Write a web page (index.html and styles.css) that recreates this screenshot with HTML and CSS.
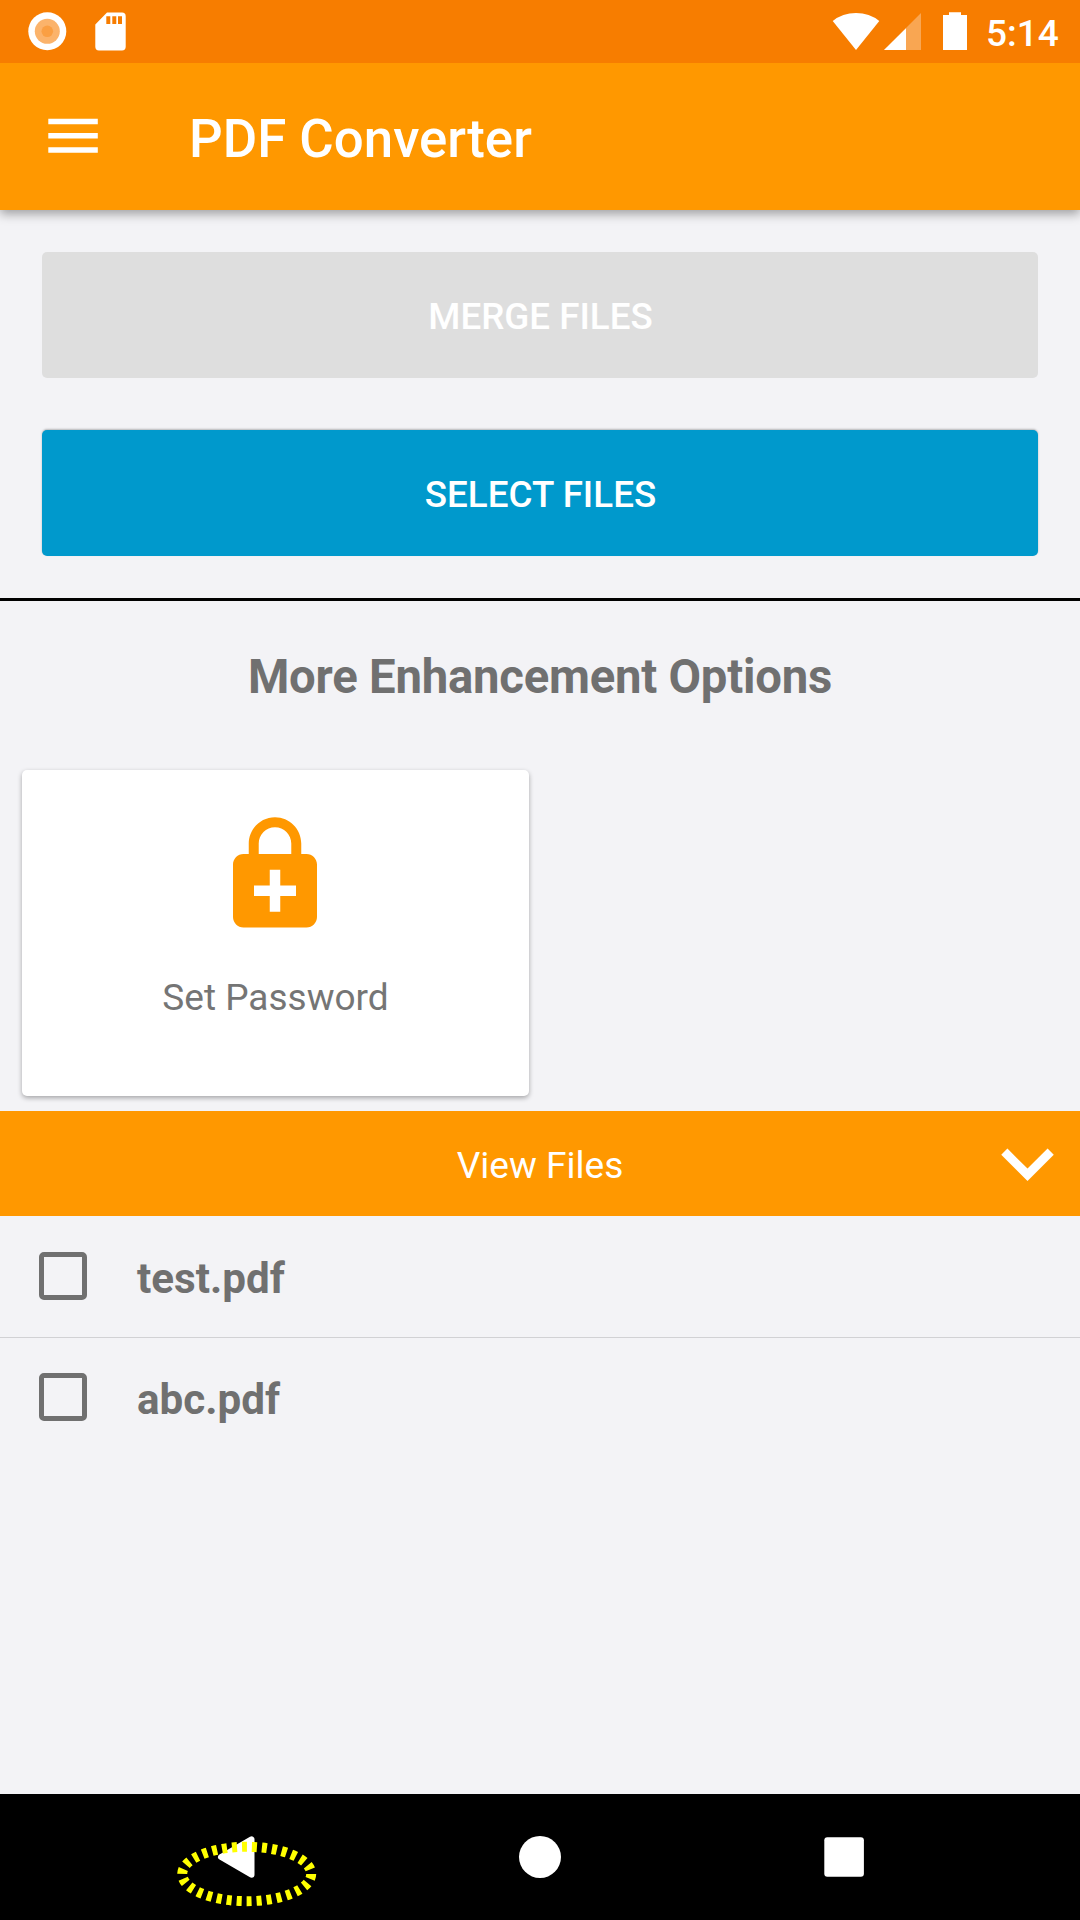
FILE: index.html
```html
<!DOCTYPE html>
<html lang="en">
<head>
<meta charset="utf-8">
<title>PDF Converter</title>
<link rel="stylesheet" href="styles.css">
</head>
<body>
<div class="screen">
  <div class="status">
    <svg class="status-left" width="140" height="63" viewBox="0 0 140 63" fill="#fff">
      <circle cx="47.3" cy="31.3" r="19"/>
      <circle cx="47.3" cy="31.3" r="12.5" fill="#fbb36b"/>
      <circle cx="47.3" cy="31.3" r="5.8" fill="#fa9f43"/>
      <path fill-rule="evenodd" d="M107 12.5h15q3.7 0 3.7 3.7v30.6q0 3.7-3.7 3.7H99q-3.7 0-3.7-3.7V24.5zM106.3 16.2v7.8h4v-7.8zM112.3 16.2v7.8h4v-7.8zM118 16.2v7.8h4v-7.8z"/>
    </svg>
    <svg class="status-right" width="150" height="63" viewBox="825 0 150 63" fill="#fff">
      <path d="M856 50L832.7 21Q842.5 13 856 13T879.3 21z"/>
      <path d="M921 13V50H884z" fill-opacity=".32"/>
      <path d="M906 28.3V50H884z"/>
      <path d="M949 12.2h12V15h6v35h-24V15h6z"/>
    </svg>
    <span class="clock">5:14</span>
  </div>
  <header class="toolbar">
    <svg class="menu" width="50" height="38" viewBox="0 0 50 38" fill="#fff">
      <path d="M.3 .8h49.5v5.500H.3zM.3 15h49.5v5.500H.3zM.3 29.2h49.5v5.500H.3z"/>
    </svg>
    <h1 class="title">PDF Converter</h1>
  </header>
  <main class="content">
    <div class="actions">
      <button class="btn btn-disabled" disabled>MERGE FILES</button>
      <button class="btn btn-primary">SELECT FILES</button>
    </div>
    <h2 class="heading">More Enhancement Options</h2>
    <div class="options">
      <div class="card">
        <svg class="lock" width="126" height="126" viewBox="0 0 24 24" fill="#ff9800"><path d="M18 8h-1V6c0-2.760-2.240-5-5-5S7 3.240 7 6v2H6c-1.100 0-2 .9-2 2v10c0 1.100.9 2 2 2h12c1.100 0 2-.9 2-2V10c0-1.100-.9-2-2-2zM8.900 6c0-1.710 1.390-3.100 3.100-3.100s3.100 1.390 3.100 3.100v2H8.900V6zM16 16h-3v3h-2v-3H8v-2h3v-3h2v3h3v2z"/></svg>
        <span class="card-label">Set Password</span>
      </div>
    </div>
    <div class="view-bar">
      <span class="view-label">View Files</span>
      <svg class="chevron" width="105" height="105" viewBox="0 0 24 24" fill="#fff"><path d="M16.590 8.590L12 13.170 7.410 8.590 6 10l6 6 6-6z"/></svg>
    </div>
    <ul class="files">
      <li class="file"><span class="box"></span><span class="name">test.pdf</span></li>
      <li class="file"><span class="box"></span><span class="name">abc.pdf</span></li>
    </ul>
  </main>
  <nav class="nav">
    <svg width="1080" height="126" viewBox="0 1794 1080 126" fill="#fff">
      <path d="M221 1857L251.5 1839.3V1874.7z" stroke="#fff" stroke-width="6" stroke-linejoin="round"/>
      <circle cx="540" cy="1857" r="21"/>
      <rect x="824.3" y="1837.2" width="39.6" height="39.6" rx="3"/>
      <ellipse cx="246.7" cy="1874" rx="64.5" ry="27.2" fill="none" stroke="#ff0" stroke-width="10" stroke-dasharray="5 5"/>
    </svg>
  </nav>
</div>
</body>
</html>
```
FILE: styles.css
```css
* { box-sizing: border-box; }
body { margin: 0; font-family: Roboto, sans-serif; }
h1, h2, ul { margin: 0; padding: 0; }
svg { display: block; }

.screen {
  width: 1080px;
  height: 1920px;
  display: flex;
  flex-direction: column;
  background: #f3f3f6;
  overflow: hidden;
}

.status {
  position: relative;
  z-index: 1;
  display: flex;
  height: 63px;
  background: #f77d00;
  color: #fff;
}
.status-right { margin-left: auto; }
.clock {
  width: 105px;
  padding-left: 11px;
  font-size: 37px;
  font-weight: 500;
  line-height: 67px;
}

.toolbar {
  display: flex;
  align-items: center;
  height: 147px;
  padding: 0 48px;
  background: #ff9800;
  color: #fff;
  box-shadow: 0 4px 10px rgba(0, 0, 0, .35);
}
.title {
  margin-left: 91px;
  font-size: 52.8px;
  font-weight: 500;
  line-height: 62px;
  padding-top: 4px;
}

.content { flex: 1; }
.actions {
  display: flex;
  flex-direction: column;
  gap: 52px;
  padding: 42px 42px;
  border-bottom: 3px solid #000;
}
.btn {
  height: 126px;
  padding: 2px 0 0 1px;
  border: 0;
  border-radius: 5px;
  color: #fff;
  font: 500 36.75px/43px Roboto, sans-serif;
}
.btn-disabled { background: #dedede; }
.btn-primary {
  background: #0099cc;
  box-shadow: 0 -1px 2px rgba(0, 0, 0, .25);
}

.heading {
  height: 155px;
  padding-top: 48px;
  text-align: center;
  font-size: 47.25px;
  line-height: 56px;
  font-weight: 700;
  letter-spacing: -.22px;
  color: #707070;
}
.options {
  height: 355px;
  padding: 14px 22px;
}
.card {
  display: flex;
  flex-direction: column;
  align-items: center;
  width: 507px;
  height: 326px;
  padding-top: 42px;
  background: #fff;
  border-radius: 5px;
  box-shadow: 0 2px 5px rgba(0, 0, 0, .32);
}
.lock { margin-right: 1px; }
.card-label {
  margin-top: 38px;
  font-size: 37px;
  line-height: 44px;
  color: #757575;
}

.view-bar {
  display: grid;
  grid-template-columns: 105px 1fr 105px;
  align-items: center;
  height: 105px;
  background: #ff9800;
  color: #fff;
}
.view-label {
  grid-column: 2;
  text-align: center;
  font-size: 37.1px;
  line-height: 44px;
  padding-top: 4px;
}

.files { list-style: none; }
.file {
  display: flex;
  align-items: center;
  height: 121px;
  padding-left: 39px;
}
.file + .file { border-top: 1px solid #d1d1d4; }
.box {
  width: 48px;
  height: 48px;
  margin-bottom: 2px;
  border: 5px solid #707070;
  border-radius: 5px;
}
.name {
  margin-left: 50px;
  padding-top: 4px;
  font-size: 42.2px;
  line-height: 50px;
  font-weight: 700;
  color: #707070;
}

.nav { height: 126px; background: #000; }
```
